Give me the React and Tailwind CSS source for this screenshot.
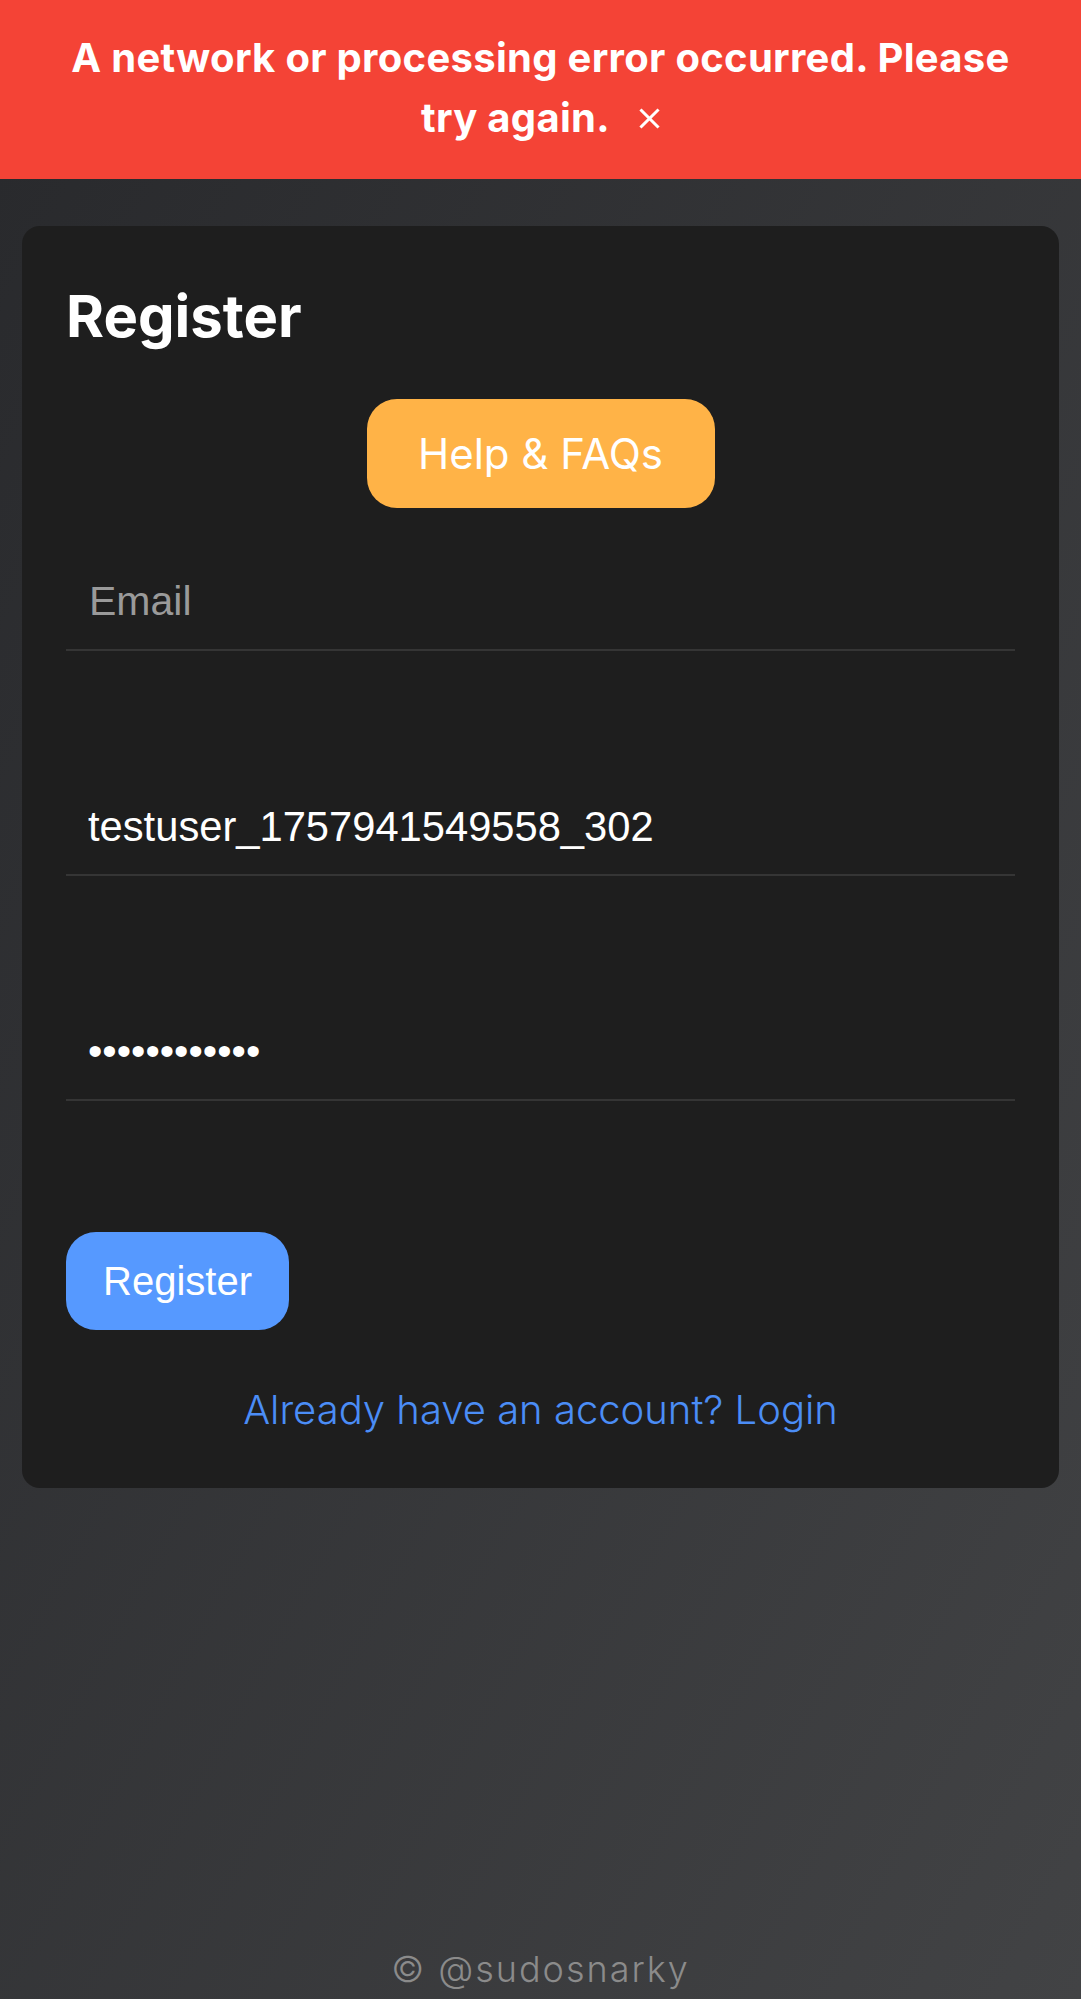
import React from "react";

export default function App() {
  return (
    <div className="min-h-screen flex flex-col bg-gradient-to-br from-[#28292c] to-[#424345] font-['Inter','Noto_Sans',sans-serif]">
      <div className="bg-[#f44336] pt-[28px] pb-[31px] px-[50px] text-center text-white font-bold text-[40px] leading-[60px] tracking-[0.3px]">
        A network or processing error occurred. Please try again.
        <span className="inline-block align-middle ml-[29px] -mt-[6px]">
          <svg width="21" height="21" viewBox="0 0 21 21" fill="none" stroke="white" strokeWidth="3" strokeLinecap="square">
            <path d="M2.5 2.5L18.5 18.5M18.5 2.5L2.5 18.5" />
          </svg>
        </span>
      </div>

      <div className="mx-[22px] mt-[47px] bg-[#1e1e1e] rounded-[18px] px-[44px] pt-[44px] pb-[48px] flex flex-col">
        <h2 className="mt-[11px] text-white font-bold text-[58px] leading-[70px]">Register</h2>

        <div className="flex justify-center mt-[48px]">
          <button className="w-[348px] h-[109px] rounded-[30px] bg-[#ffb347] text-white text-[42px] leading-[50px] font-normal flex items-center justify-center">
            Help &amp; FAQs
          </button>
        </div>

        <input
          type="email"
          placeholder="Email"
          className="mt-[46px] w-full bg-transparent pt-[24px] pb-[24px] pl-[23px] pr-[24px] border-b-2 border-[#353535] text-white placeholder:text-[#9a9a9a] text-[41px] leading-[47px] outline-none font-['Liberation_Sans',Arial,sans-serif]"
        />
        <input
          type="text"
          defaultValue="testuser_1757941549558_302"
          className="mt-[128px] w-full bg-transparent pt-[24px] pb-[24px] pl-[22px] pr-[24px] border-b-2 border-[#353535] text-white text-[41.7px] leading-[47px] outline-none font-['Liberation_Sans',Arial,sans-serif]"
        />
        <input
          type="password"
          defaultValue="password1234"
          className="mt-[128px] w-full bg-transparent pt-[24px] pb-[24px] pl-[22px] pr-[24px] border-b-2 border-[#353535] text-white text-[41px] leading-[47px] outline-none font-['Liberation_Sans',Arial,sans-serif]"
        />

        <div className="mt-[131px] flex">
          <button className="h-[98px] px-[37px] rounded-[30px] bg-[#5699ff] text-white text-[40px] leading-[46px] font-['Liberation_Sans',Arial,sans-serif]">
            Register
          </button>
        </div>

        <p className="mt-[50px] text-center text-[40px] leading-[60px] font-light text-[#4b8df6]">
          Already have an account? Login
        </p>
      </div>

      <footer className="mt-auto pb-[3px] text-center text-[36px] leading-[54px] font-light tracking-[2px] text-[#8b8b8b]">
        © @sudosnarky
      </footer>
    </div>
  );
}
